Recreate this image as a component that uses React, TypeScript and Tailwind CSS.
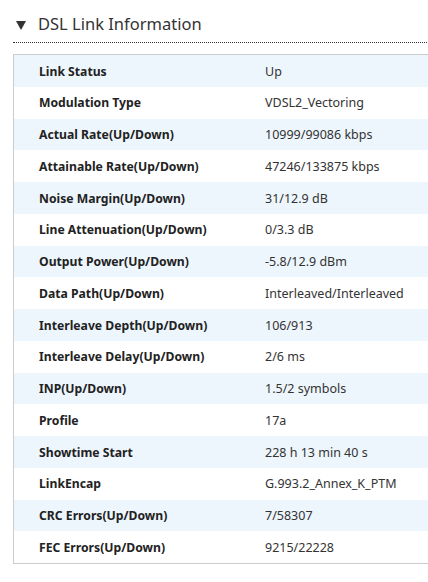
import React from "react";

const rows: [string, string][] = [
  ["Link Status", "Up"],
  ["Modulation Type", "VDSL2_Vectoring"],
  ["Actual Rate(Up/Down)", "10999/99086 kbps"],
  ["Attainable Rate(Up/Down)", "47246/133875 kbps"],
  ["Noise Margin(Up/Down)", "31/12.9 dB"],
  ["Line Attenuation(Up/Down)", "0/3.3 dB"],
  ["Output Power(Up/Down)", "-5.8/12.9 dBm"],
  ["Data Path(Up/Down)", "Interleaved/Interleaved"],
  ["Interleave Depth(Up/Down)", "106/913"],
  ["Interleave Delay(Up/Down)", "2/6 ms"],
  ["INP(Up/Down)", "1.5/2 symbols"],
  ["Profile", "17a"],
  ["Showtime Start", "228 h 13 min 40 s"],
  ["LinkEncap", "G.993.2_Annex_K_PTM"],
  ["CRC Errors(Up/Down)", "7/58307"],
  ["FEC Errors(Up/Down)", "9215/22228"],
];

export default function App() {
  return (
    <div
      className="w-[428px] h-[582px] overflow-hidden bg-white text-[#333]"
      style={{ fontFamily: '"Noto Sans", "Open Sans", sans-serif' }}
    >
      <div className="pl-[13px] pt-[12px]">
        <div className="flex items-center h-[24px]">
          <svg width="10" height="9" viewBox="0 0 10 9" className="ml-[3px] mr-[12px] mt-[2px]">
            <polygon points="0,0 10,0 5,9" fill="#333" />
          </svg>
          <h2 className="text-[16.5px] text-[#333] leading-none">DSL Link Information</h2>
        </div>
        <div className="mt-[6px] border-t border-dotted border-[#333] w-[440px]" />
        <div className="mt-[11px] w-[440px] border border-[#ccc]">
          {rows.map(([k, v], i) => (
            <div
              key={k}
              className={`flex items-center h-[31.75px] pt-[2px] ${
                i % 2 === 0 ? "bg-[#eef6fd]" : "bg-white"
              }`}
            >
              <div className="w-[251px] pl-[25px] font-bold text-[12.2px] text-[#222]">{k}</div>
              <div className="text-[12.5px] text-[#333]">{v}</div>
            </div>
          ))}
        </div>
      </div>
    </div>
  );
}
